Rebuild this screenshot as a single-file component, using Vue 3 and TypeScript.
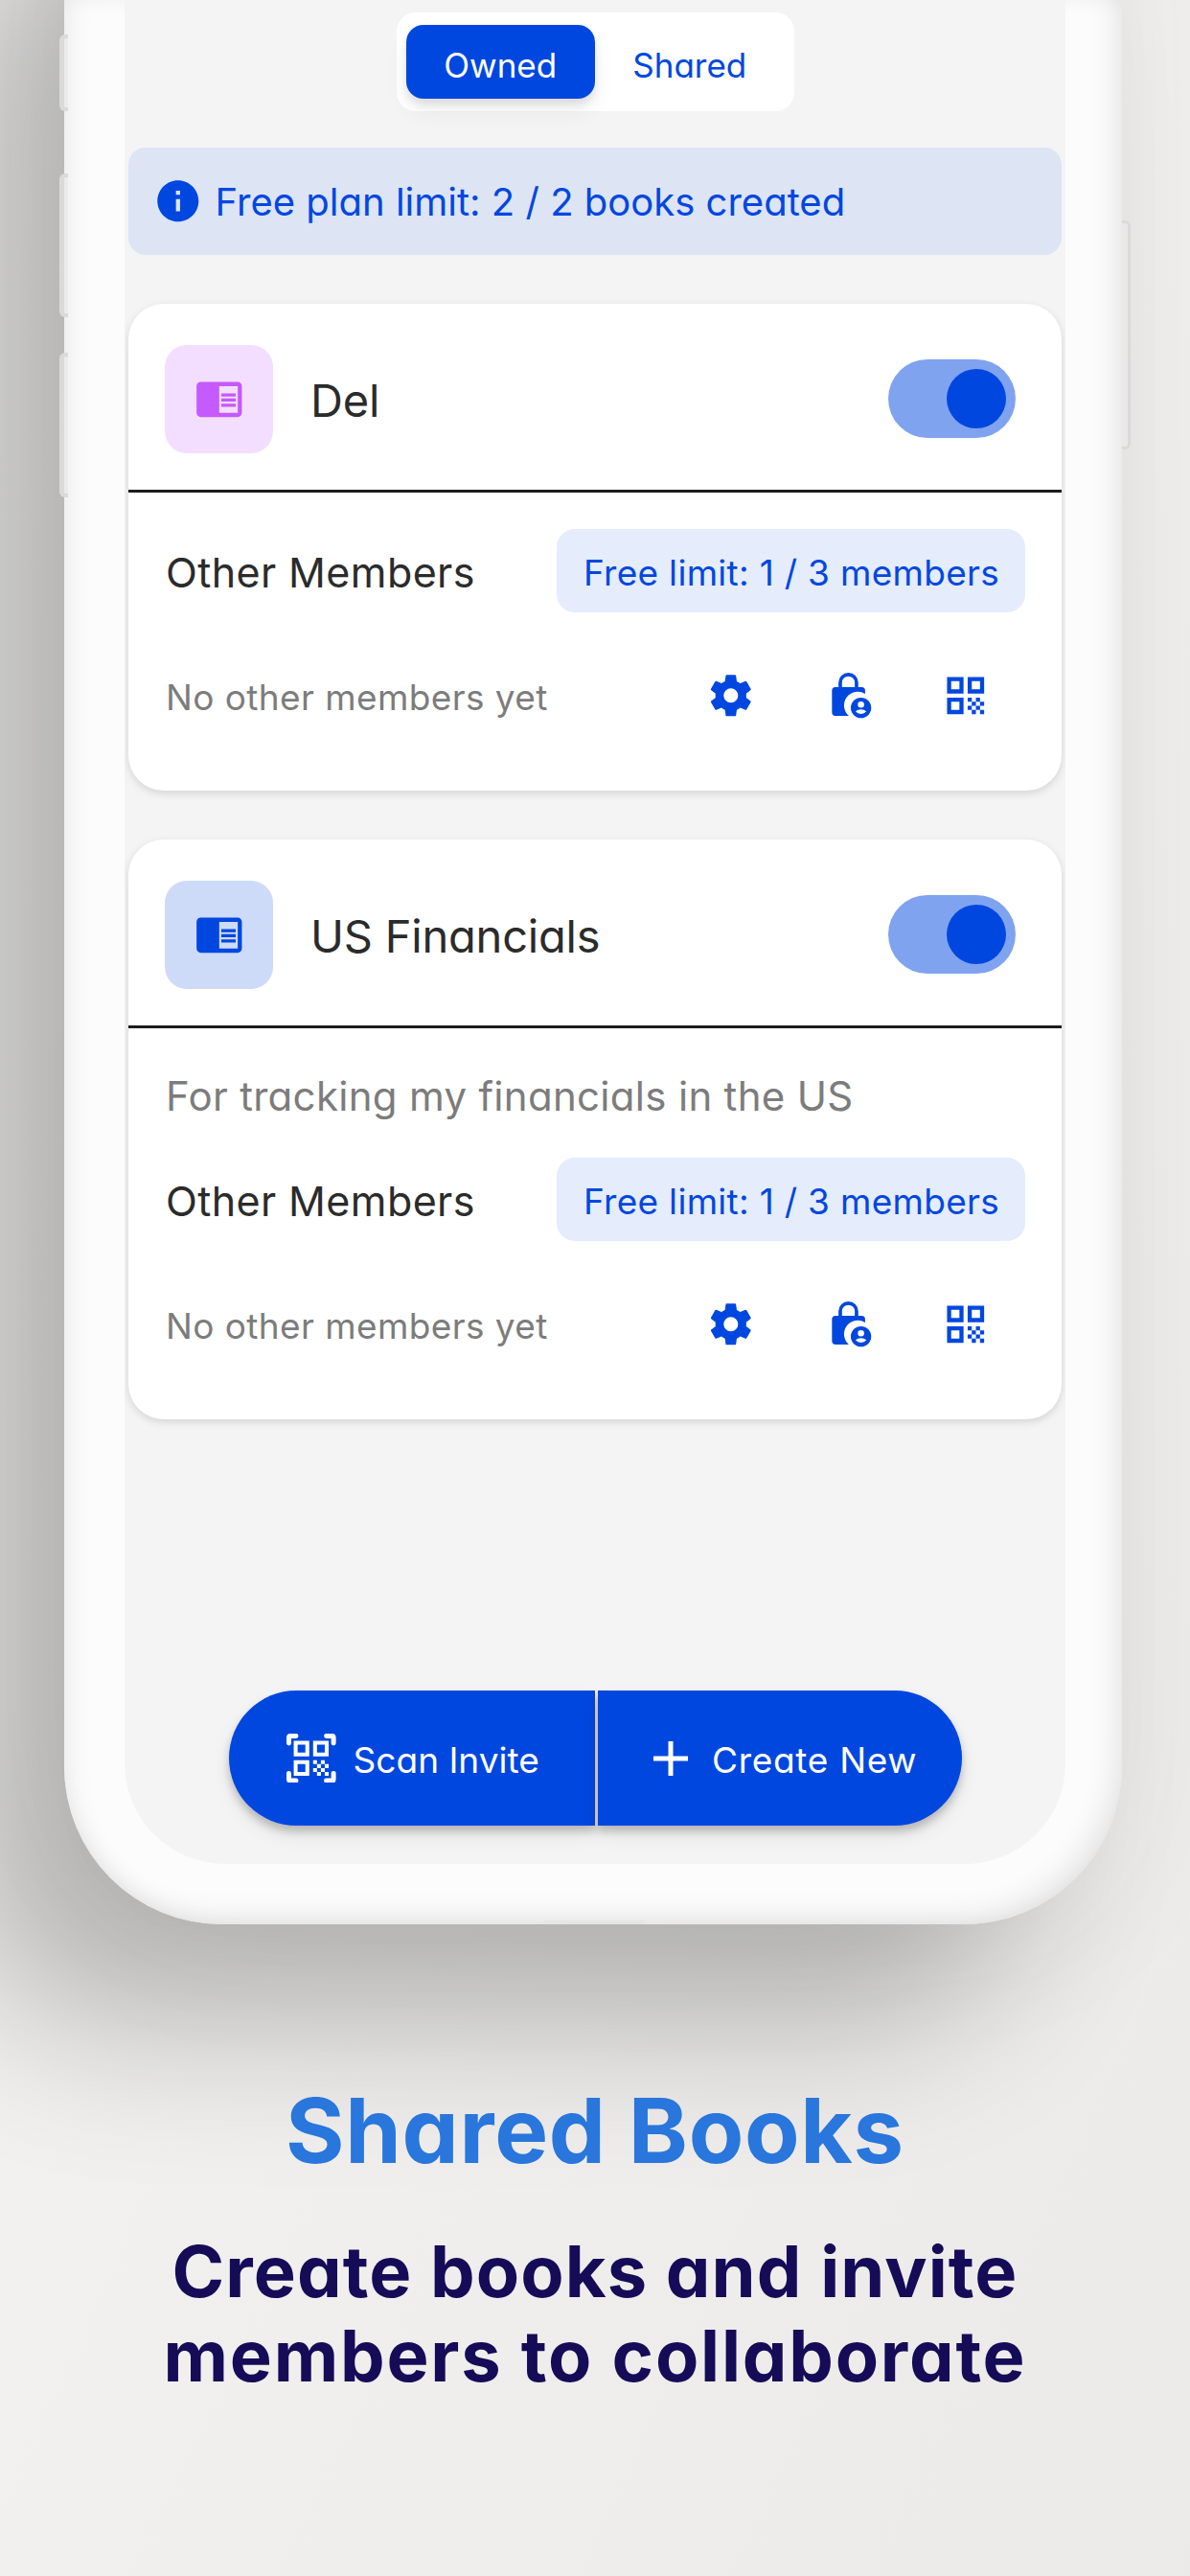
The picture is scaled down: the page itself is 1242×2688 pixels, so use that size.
<script setup lang="ts">
interface Book {
  name: string
  tone: 'violet' | 'blue'
  description?: string
}

const books: Book[] = [
  { name: 'Del', tone: 'violet' },
  { name: 'US Financials', tone: 'blue', description: 'For tracking my financials in the US' },
]
</script>

<template>
  <main class="page">
    <section class="phone">
      <i class="side b1"></i>
      <i class="side b2"></i>
      <i class="side b3"></i>
      <i class="side right"></i>
      <i class="port"></i>
      <div class="screen">
        <div class="tabs">
          <button class="tab active"><span>Owned</span></button>
          <button class="tab"><span>Shared</span></button>
        </div>

        <div class="banner">
          <svg class="icon" viewBox="0 0 24 24"><path d="M12 2C6.48 2 2 6.48 2 12s4.48 10 10 10 10-4.48 10-10S17.52 2 12 2zm1 15h-2v-6h2v6zm0-8h-2V7h2v2z" /></svg>
          <span>Free plan limit: 2 / 2 books created</span>
        </div>

        <article v-for="book in books" :key="book.name" class="card">
          <header class="head">
            <div class="tile" :class="book.tone">
              <svg class="icon" viewBox="0 0 24 24"><path d="M13 12h7v1.5h-7zm0-2.5h7V11h-7zm0 5h7V16h-7zM21 4H3c-1.1 0-2 .9-2 2v13c0 1.1.9 2 2 2h18c1.1 0 2-.9 2-2V6c0-1.1-.9-2-2-2zm0 15h-9V6h9v13z" /></svg>
            </div>
            <h2>{{ book.name }}</h2>
            <div class="switch"><span class="thumb"></span></div>
          </header>
          <div class="body">
            <p v-if="book.description" class="desc">{{ book.description }}</p>
            <div class="members">
              <h3>Other Members</h3>
              <span class="limit">Free limit: 1 / 3 members</span>
            </div>
            <div class="actions">
              <span class="empty">No other members yet</span>
              <div class="icons">
                <svg class="icon" viewBox="0 0 24 24"><path d="M12,15.5A3.5,3.5 0 0,1 8.5,12A3.5,3.5 0 0,1 12,8.5A3.5,3.5 0 0,1 15.5,12A3.5,3.5 0 0,1 12,15.5M19.43,12.97C19.47,12.65 19.5,12.33 19.5,12C19.5,11.67 19.47,11.34 19.43,11L21.54,9.37C21.73,9.22 21.78,8.95 21.66,8.73L19.66,5.27C19.54,5.05 19.27,4.96 19.05,5.05L16.56,6.05C16.04,5.66 15.5,5.32 14.87,5.07L14.5,2.42C14.46,2.18 14.25,2 14,2H10C9.75,2 9.54,2.18 9.5,2.42L9.13,5.07C8.5,5.32 7.96,5.66 7.44,6.05L4.95,5.05C4.73,4.96 4.46,5.05 4.34,5.27L2.34,8.73C2.21,8.95 2.27,9.22 2.46,9.37L4.57,11C4.53,11.34 4.5,11.67 4.5,12C4.5,12.33 4.53,12.65 4.57,12.97L2.46,14.63C2.27,14.78 2.21,15.05 2.34,15.27L4.34,18.73C4.46,18.95 4.73,19.03 4.95,18.95L7.44,17.94C7.96,18.34 8.5,18.68 9.13,18.93L9.5,21.58C9.54,21.82 9.75,22 10,22H14C14.25,22 14.46,21.82 14.5,21.58L14.87,18.93C15.5,18.67 16.04,18.34 16.56,17.94L19.05,18.95C19.27,19.03 19.54,18.95 19.66,18.73L21.66,15.27C21.78,15.05 21.73,14.78 21.54,14.63L19.43,12.97Z" /></svg>
                <svg class="icon" viewBox="0 0 155 155">
                  <path d="M51 54V37a25.500 25.500 0 0 1 51 0V54" fill="none" stroke="currentColor" stroke-width="11" />
                  <path d="M36 51H118a11 11 0 0 1 11 11V72a43 43 0 0 0-51 69H36a11 11 0 0 1-11-11V62a11 11 0 0 1 11-11z" />
                  <path fill-rule="evenodd" d="M116 84a32 32 0 1 1 0 64 32 32 0 0 1 0-64zm0 12a10 10 0 1 0 0 20 10 10 0 0 0 0-20zm-17 31q6 8 17 8t17-8q-7-6-17-6t-17 6z" />
                </svg>
                <svg class="icon" viewBox="0 0 24 24"><path d="M3 11h8V3H3v8zm2-6h4v4H5V5zM3 21h8v-8H3v8zm2-6h4v4H5v-4zM13 3v8h8V3h-8zm6 6h-4V5h4v4zM19 19h2v2h-2zM13 13h2v2h-2zM15 15h2v2h-2zM13 17h2v2h-2zM15 19h2v2h-2zM17 17h2v2h-2zM17 13h2v2h-2zM19 15h2v2h-2z" /></svg>
              </div>
            </div>
          </div>
        </article>

        <div class="cta">
          <button class="scan">
            <svg class="icon" viewBox="0 0 155 155">
              <path d="M7.500 30V12Q7.500 7.500 12 7.500H30M125 7.500H143Q147.500 7.500 147.500 12V30M147.500 125V143Q147.500 147.500 143 147.500H125M30 147.500H12Q7.500 147.500 7.500 143V125" fill="none" stroke="currentColor" stroke-width="15" stroke-linecap="round" />
              <path transform="translate(4.500 4.500) scale(6.080)" d="M3 11h8V3H3v8zm2-6h4v4H5V5zM3 21h8v-8H3v8zm2-6h4v4H5v-4zM13 3v8h8V3h-8zm6 6h-4V5h4v4zM19 19h2v2h-2zM13 13h2v2h-2zM15 15h2v2h-2zM13 17h2v2h-2zM15 19h2v2h-2zM17 17h2v2h-2zM17 13h2v2h-2zM19 15h2v2h-2z" />
            </svg>
            <span>Scan Invite</span>
          </button>
          <button class="create">
            <svg class="icon" viewBox="0 0 36 36"><path d="M18 0V36M0 18H36" stroke="currentColor" stroke-width="5" /></svg>
            <span>Create New</span>
          </button>
        </div>
      </div>
    </section>

    <section class="caption">
      <h1>Shared Books</h1>
      <p><span class="l1">Create books and invite</span><br /><span class="l2">members to collaborate</span></p>
    </section>
  </main>
</template>

<style>
body {
  margin: 0;
}
</style>

<style scoped>
* {
  box-sizing: border-box;
}
.page {
  position: relative;
  isolation: isolate;
  width: 1242px;
  height: 2688px;
  overflow: hidden;
  background: linear-gradient(115deg, #f4f3f2 0%, #f1f0ee 50%, #ebeae9 100%);
  font-family: Inter, "Liberation Sans", sans-serif;
  font-feature-settings: "cv11";
  color: #2b2b2b;
}
h1, h2, h3, p {
  margin: 0;
  font-weight: 400;
}
button {
  border: 0;
  padding: 0;
  background: none;
  font: inherit;
  font-feature-settings: inherit;
  color: inherit;
}
span, h1, h2, h3, p {
  white-space: nowrap;
}
.icon {
  display: block;
  flex: none;
  width: 51.6px;
  height: 51.6px;
  fill: currentColor;
}
.phone {
  position: relative;
  width: 1104px;
  height: 2008px;
  margin-left: 67px;
  padding: 0 59px 63px 63px;
  border-radius: 0 0 165px 165px;
  background: #fcfcfc;
  box-shadow:
    inset -12px -12px 32px -8px rgba(0, 0, 0, 0.11),
    inset 12px 0 28px -8px rgba(0, 0, 0, 0.07);
}
/* Cast shadow; the device continues above the top edge of the page. */
.phone::before {
  content: "";
  position: absolute;
  z-index: -1;
  inset: -200px 0 0 0;
  border-radius: 165px;
  box-shadow:
    -112px 108px 165px rgba(0, 0, 0, 0.235),
    0 10px 160px rgba(60, 60, 56, 0.07);
}
.side {
  position: absolute;
  width: 9px;
  left: -5px;
  border: 4px solid #dadada;
  border-left-width: 5px;
  border-right: 0;
  border-radius: 6px 0 0 6px;
  background: #ebebeb;
}
.b1 { top: 36px; height: 80px; }
.b2 { top: 181px; height: 150px; }
.b3 { top: 368px; height: 151px; }
.side.right {
  left: auto;
  right: -9px;
  top: 230px;
  height: 239px;
  border: 3px solid #dadada;
  border-left: 0;
  border-radius: 0 6px 6px 0;
  background: #e9e9e9;
}
.port {
  position: absolute;
  left: 500px;
  bottom: 0;
  width: 105px;
  height: 4px;
  background: #e6e6e6;
}
.screen {
  position: relative;
  display: flex;
  flex-direction: column;
  height: 1945px;
  padding: 13px 4px 0;
  overflow: hidden;
  border-radius: 0 0 105px 105px;
  background: #f4f4f4;
}
.tabs {
  display: flex;
  align-self: center;
  width: 415px;
  height: 103px;
  margin-bottom: 38px;
  padding: 13px 10px;
  border-radius: 20px;
  background: #fff;
}
.tab {
  display: flex;
  align-items: center;
  justify-content: center;
  width: 198px;
  height: 77px;
  padding-top: 6px;
  border-radius: 18px;
  font-size: 35px;
  color: #0047e0;
}
.tab.active {
  background: #0047e0;
  color: #fff;
  box-shadow: 0 6px 8px rgba(0, 0, 0, 0.1), 0 14px 26px rgba(0, 0, 0, 0.05);
}
.banner {
  display: flex;
  align-items: center;
  height: 112px;
  margin-bottom: 51px;
  padding-left: 26px;
  border-radius: 18px;
  background: #dde4f4;
  color: #0047e0;
  font-size: 40px;
}
.banner span { padding-left: 13px; }
.card {
  display: flex;
  flex-direction: column;
  margin-bottom: 51px;
  border-radius: 37px;
  background: #fff;
  box-shadow: 0 3px 9px rgba(0, 0, 0, 0.13);
}
.head {
  display: flex;
  align-items: center;
  height: 197px;
  padding: 4px 48px 0 38px;
  border-bottom: 3px solid #1c1c1c;
}
.tile {
  display: flex;
  align-items: center;
  justify-content: center;
  width: 113px;
  height: 113px;
  border-radius: 23px;
}
.violet { background: #f3deff; color: #c45aff; }
.blue { background: #cddbf9; color: #0047e0; }
.head h2 {
  margin-left: 39px;
  padding-top: 3px;
  font-size: 47px;
  letter-spacing: -0.2px;
}
.switch {
  display: flex;
  justify-content: flex-end;
  width: 133px;
  height: 82px;
  margin-left: auto;
  padding: 10px;
  border-radius: 41px;
  background: #80a3ef;
}
.thumb {
  width: 62px;
  height: 62px;
  border-radius: 50%;
  background: #0047e0;
}
.body {
  padding: 38px 38px 0 39px;
}
.desc {
  height: 97px;
  padding-top: 4px;
  font-size: 42px;
  line-height: 58px;
  letter-spacing: 0.3px;
  color: #7c7c7c;
}
.members {
  display: flex;
  align-items: center;
  justify-content: space-between;
  height: 87px;
}
.members h3 {
  padding-top: 3px;
  font-size: 43px;
  letter-spacing: 0.4px;
}
.limit {
  display: flex;
  align-items: center;
  width: 489px;
  height: 87px;
  padding: 3px 0 0 28px;
  border-radius: 19px;
  background: #e5ecfc;
  color: #0047e0;
  font-size: 37px;
  letter-spacing: 0.3px;
}
.actions {
  display: flex;
  align-items: center;
  justify-content: space-between;
  height: 186px;
  padding: 0 36px 12px 0;
}
.empty {
  padding-top: 3px;
  font-size: 37px;
  letter-spacing: 0.4px;
  color: #7c7c7c;
}
.icons {
  display: flex;
  gap: 71px;
  color: #0047e0;
}
.cta {
  position: absolute;
  left: 109px;
  bottom: 40px;
  display: flex;
  width: 765px;
  height: 141px;
  gap: 3px;
  color: #fff;
  font-size: 37px;
}
.cta button {
  display: flex;
  align-items: center;
  flex: 1;
  background: #0047e0;
  box-shadow: 0 6px 9px rgba(0, 0, 0, 0.2), 0 10px 20px rgba(0, 0, 0, 0.08);
}
.cta span { padding-top: 4px; }
.cta .scan {
  padding-left: 60px;
  border-radius: 71px 0 0 71px;
}
.scan span { margin-left: 18px; }
.cta .create {
  padding-left: 58px;
  border-radius: 0 71px 71px 0;
}
.create .icon { width: 36px; height: 36px; }
.create span {
  margin-left: 25px;
  letter-spacing: 0.7px;
}
.caption {
  text-align: center;
}
.caption h1 {
  margin-top: 155px;
  font-size: 94px;
  line-height: 120px;
  font-weight: 650;
  letter-spacing: 0.7px;
  color: #2976dc;
}
.caption p {
  margin-top: 43px;
  font-size: 74px;
  line-height: 88px;
  font-weight: 650;
  color: #150b57;
}
.l1 { letter-spacing: 1.1px; }
.l2 { letter-spacing: 1.8px; }
</style>
